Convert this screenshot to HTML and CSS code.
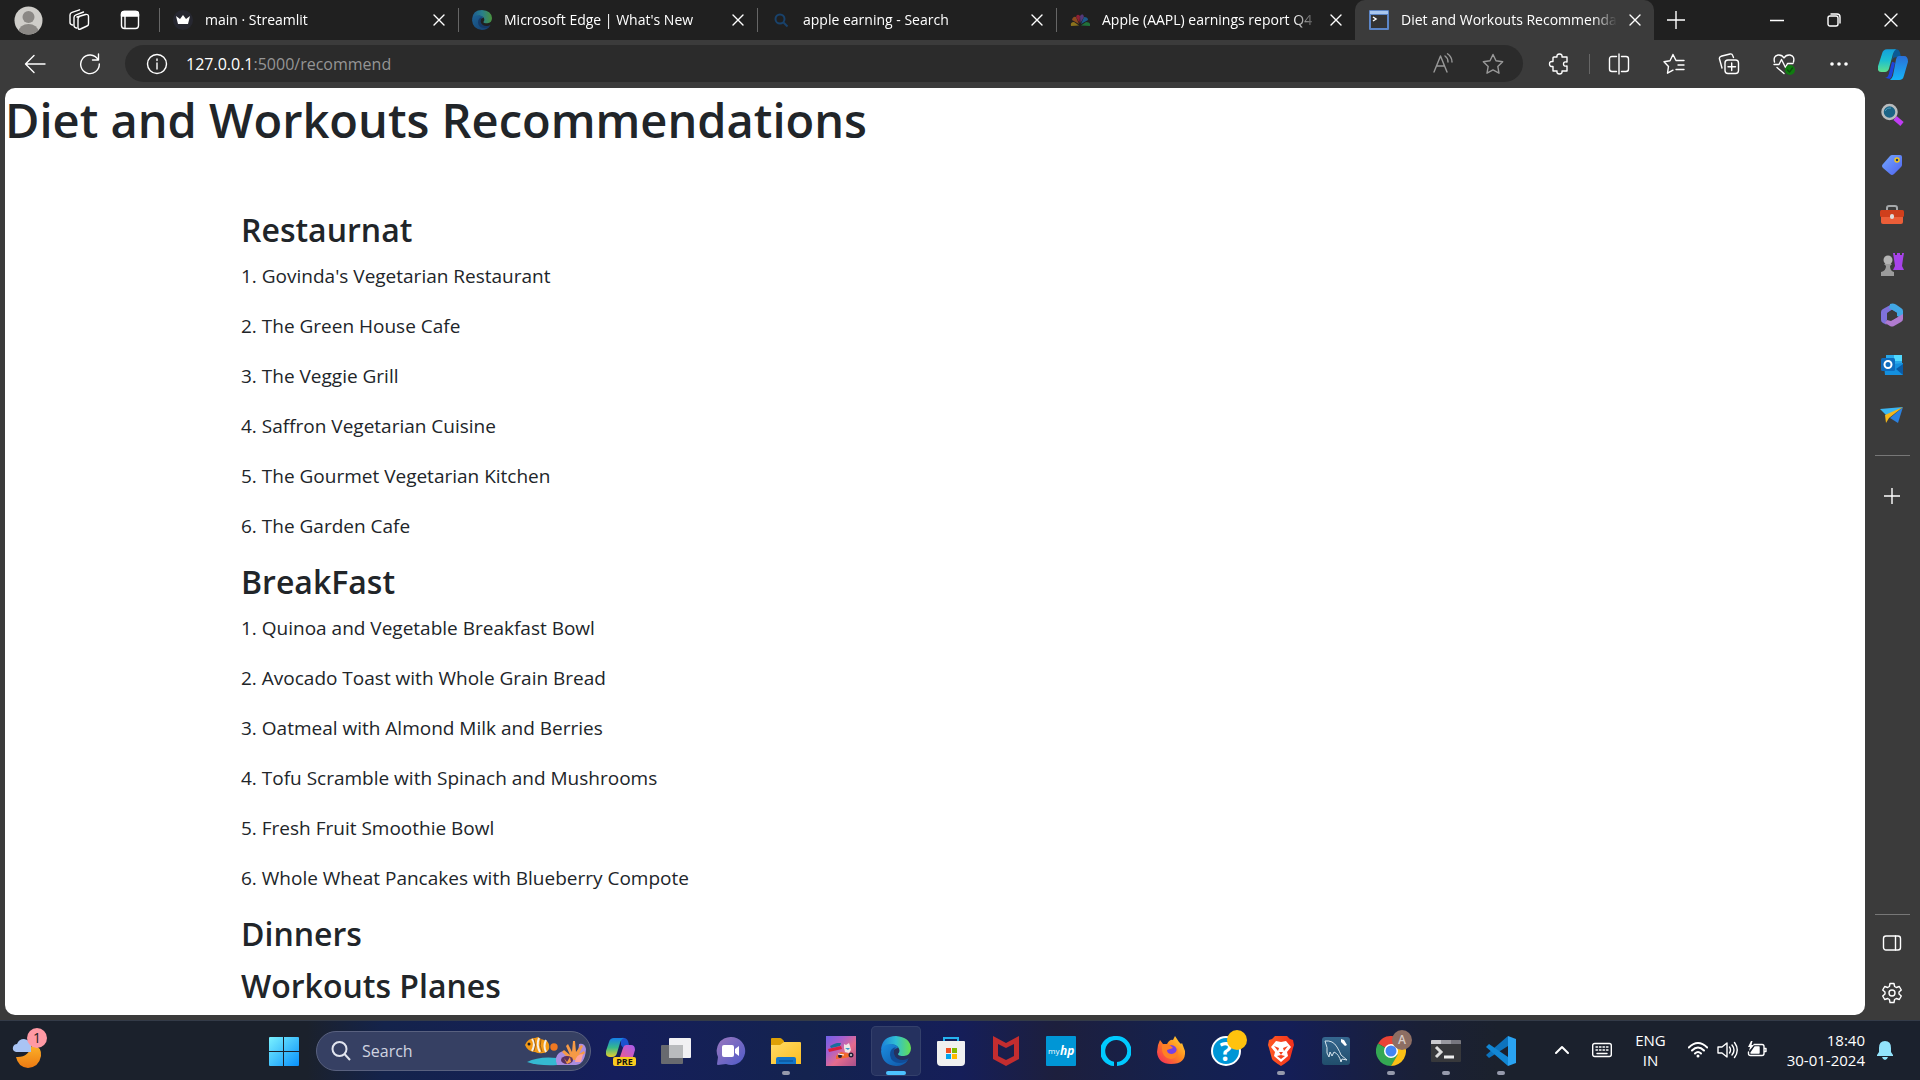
FILE: index.html
```html
<!DOCTYPE html>
<html lang="en">
<head>
<meta charset="utf-8">
<title>Diet and Workouts Recommendations</title>
<link rel="stylesheet" href="styles.css">
</head>
<body>
<header class="tabstrip">
  <div class="profile">
    <button class="icon-btn" aria-label="Profile"><svg width="29" height="29" viewBox="0 0 29 29"><defs><clipPath id="av"><circle cx="14.500" cy="14.500" r="14"/></clipPath></defs><circle cx="14.500" cy="14.500" r="14" fill="#cfcdc9"/><g clip-path="url(#av)" fill="#8b8885"><circle cx="14.500" cy="11" r="6"/><ellipse cx="14.500" cy="26" rx="10" ry="8"/></g></svg></button>
    <button class="icon-btn" aria-label="Workspaces"><svg class="line" width="22" height="22" viewBox="0 0 22 22"><path d="M9 8l8.500-2.500q3-.5 3 2v7.500q0 1.500-1.500 2l-6.500 3q-2.500.8-2.500-1.500V10q0-2 2-2.700M8.500 19Q6 18.500 6 16.500V8.500q0-2 2-2.700L15.500 3M4.500 16Q2 15.500 2 13.500V6q0-2 2-2.700L11.500.8"/></svg></button>
    <button class="icon-btn" aria-label="Tab actions"><svg class="line" width="20" height="20" viewBox="0 0 20 20"><rect x="1.500" y="1.500" width="17" height="17" rx="3"/><path d="M1.500 6V4q0-2.500 2.500-2.500h12q2.500 0 2.500 2.500v2z" fill="#fff"/><path d="M5 6v12"/></svg></button>
  </div>
  <nav class="tabs" aria-label="Tabs">
    <div class="tab">
      <svg width="20" height="20" viewBox="0 0 20 20"><circle cx="10" cy="10" r="10" fill="#262730"/><path d="M3 6l4 3 3-4 3 4 4-3-2 8H5z" fill="#fff"/></svg>
      <a href="#">main · Streamlit</a><button class="close" aria-label="Close tab"><svg class="line" width="12" height="12" viewBox="0 0 12 12"><path d="M1 1l10 10M11 1L1 11"/></svg></button>
    </div>
    <div class="tab">
      <svg class="dim" width="20" height="20" viewBox="0 0 30 30"><use href="#edge"/></svg>
      <a href="#">Microsoft Edge | What's New</a><button class="close" aria-label="Close tab"><svg class="line" width="12" height="12" viewBox="0 0 12 12"><path d="M1 1l10 10M11 1L1 11"/></svg></button>
    </div>
    <div class="tab">
      <svg width="20" height="20" viewBox="0 0 20 20" fill="none" stroke="#19426b" stroke-width="2"><circle cx="9" cy="9" r="4.500"/><path d="M12.500 12.500l4 4"/></svg>
      <a href="#">apple earning - Search</a><button class="close" aria-label="Close tab"><svg class="line" width="12" height="12" viewBox="0 0 12 12"><path d="M1 1l10 10M11 1L1 11"/></svg></button>
    </div>
    <div class="tab">
      <svg width="20" height="20" viewBox="0 0 20 20"><path d="M9 15.500L1 16q-1-4 3-4z" fill="#8b731c"/><path d="M9 14L2 10q1-4 4-3z" fill="#8c4a20"/><path d="M9.500 13L6 7q1-4 4-1z" fill="#8d2035"/><path d="M10.500 13L10 6q3-4 4 1z" fill="#553878"/><path d="M11 14l3-7q4 0 4 3z" fill="#1c5a8c"/><path d="M11 15.500l5-3.500q5 0 4 4z" fill="#20723a"/></svg>
      <a href="#">Apple (AAPL) earnings report Q4</a><button class="close" aria-label="Close tab"><svg class="line" width="12" height="12" viewBox="0 0 12 12"><path d="M1 1l10 10M11 1L1 11"/></svg></button>
    </div>
    <div class="tab active">
      <svg width="20" height="20" viewBox="0 0 20 20"><rect width="20" height="20" rx="1" fill="#5c86c8"/><rect x="1" y="1" width="18" height="3" fill="#a9c7ef"/><rect x="2" y="5" width="16" height="13" fill="#333"/><path d="M4 7l3 2-3 2" fill="none" stroke="#fff" stroke-width="1.500"/></svg>
      <a href="#">Diet and Workouts Recommendations</a><button class="close" aria-label="Close tab"><svg class="line" width="12" height="12" viewBox="0 0 12 12"><path d="M1 1l10 10M11 1L1 11"/></svg></button>
    </div>
  </nav>
  <button class="newtab" aria-label="New tab"><svg class="line" width="18" height="18" viewBox="0 0 18 18"><path d="M9 0v18M0 9h18"/></svg></button>
  <div class="window-controls">
    <button aria-label="Minimize"><svg class="line" width="14" height="14" viewBox="0 0 14 14"><path d="M0 7.500h14"/></svg></button>
    <button aria-label="Restore"><svg class="line" width="14" height="14" viewBox="0 0 14 14"><rect x="1" y="3" width="10" height="10" rx="2"/><path d="M4 1h6q3 0 3 3v6"/></svg></button>
    <button aria-label="Close window"><svg class="line" width="14" height="14" viewBox="0 0 14 14"><path d="M1 1l12 12M13 1L1 13"/></svg></button>
  </div>
</header>

<div class="toolbar">
  <button class="icon-btn" aria-label="Back"><svg class="line" width="22" height="20" viewBox="0 0 22 20"><path d="M21 10H2M10 1.500L1.500 10l8.500 8.500"/></svg></button>
  <button class="icon-btn" aria-label="Refresh"><svg class="line" width="22" height="22" viewBox="0 0 22 22"><path d="M19 6.500A9.300 9.300 0 1 0 20.300 11M19.500 1v6H13.500"/></svg></button>
  <div class="address">
    <svg class="line" width="22" height="22" viewBox="0 0 22 22"><circle cx="11" cy="11" r="9.500"/><path d="M11 10v6M11 6v1.600"/></svg>
    <a class="url" href="#"><span>127.0.0.1</span>:5000/recommend</a>
    <button class="icon-btn muted" aria-label="Read aloud"><svg class="line" width="22" height="22" viewBox="0 0 22 22"><path d="M2 19L8.500 3 15 19M4.500 13h8M13 3q3 2 3 6M15.500.8Q20 4 20 9"/></svg></button>
    <button class="icon-btn muted" aria-label="Add to favorites"><svg class="line" width="22" height="22" viewBox="0 0 22 22"><path d="M11 1.500l3 6.200 6.700 1-4.900 4.700 1.200 6.800-6-3.300-6 3.300 1.200-6.800-4.900-4.700 6.700-1z"/></svg></button>
  </div>
  <div class="tools">
    <button class="icon-btn" aria-label="Extensions"><svg class="line" width="22" height="22" viewBox="0 0 22 22"><path d="M6 4h3q-.5-3 2.500-3T14 4h5v5q-3.500-.7-3.500 2t3.500 2v5h-5q.5 3-2.500 3T9 18H5v-4.500q-3.500.5-3.500-2.500T5 8.500V5q0-1 1-1z"/></svg></button>
    <span class="divider"></span>
    <button class="icon-btn" aria-label="Split screen"><svg class="line" width="22" height="22" viewBox="0 0 22 22"><path d="M8.500 3.500H4q-2.500 0-2.500 2.500v10q0 2.500 2.500 2.500h4.500M13.500 3.500H18q2.500 0 2.500 2.500v10q0 2.500-2.500 2.500h-4.500M11 1v20"/></svg></button>
    <button class="icon-btn" aria-label="Favorites"><svg class="line" width="22" height="22" viewBox="0 0 22 22"><path d="M13 7.500h8M15 12h6M13 16.500h8M13 7.500L10 1.500 7 7.700l-6 1 4.500 4.700-1 6.800 5.500-3"/></svg></button>
    <button class="icon-btn" aria-label="Collections"><svg class="line" width="22" height="22" viewBox="0 0 22 22"><rect x="7" y="7" width="13.500" height="13.500" rx="3"/><path d="M13.700 10v7.500M10 13.700h7.500M4 15L1.500 6q-.5-2 1.500-2.700L12 1q2-.5 2.700 1.500L15.500 4.500"/></svg></button>
    <button class="icon-btn" aria-label="Browser essentials"><svg class="line" width="22" height="22" viewBox="0 0 22 22"><path d="M1.500 9Q0 3 5 2q4-.5 6 3 2-3.500 6-3 5 1 3.500 7M1 11.500h5l2.500-5 4 8 2-4h5.500M4 14.500l7 6"/><circle cx="17" cy="17" r="5" fill="#107c10" stroke="none"/><path d="M14.500 17l2 2 3-4" stroke="#0b4f0b"/></svg></button>
    <button class="icon-btn" aria-label="More"><svg width="22" height="22" viewBox="0 0 22 22" fill="#fff"><circle cx="4" cy="11" r="1.800"/><circle cx="11" cy="11" r="1.800"/><circle cx="18" cy="11" r="1.800"/></svg></button>
  </div>
  <button class="copilot" aria-label="Copilot"><svg width="30" height="32" viewBox="0 0 30 28" preserveAspectRatio="none"><defs><linearGradient id="cp1" x1="0" y1="0" x2="0" y2="1"><stop offset="0" stop-color="#14a0dc"/><stop offset=".5" stop-color="#1cbfd0"/><stop offset="1" stop-color="#5fe08c"/></linearGradient><linearGradient id="cp2" x1="0" y1="0" x2="0" y2="1"><stop offset="0" stop-color="#2a6fd8"/><stop offset="1" stop-color="#16b4f8"/></linearGradient></defs><path d="M16 1h2q3 0 4 3l1 4h-5q-3 0-4 3z" fill="#0a5a96"/><path d="M7 26q3 0 4-4l3-10 3 1-3 11q-1 3-3 3z" fill="#1e43dc"/><path d="M9 1h9q-2 1-3 4l-4 13q-1 3-4 3H3q-4 0-3-5L4 5q1-4 5-4z" fill="url(#cp1)"/><path d="M21 7h5q4 0 4 5l-4 12q-1 4-5 4h-9q2-1 3-4l3-14q1-3 3-3z" fill="url(#cp2)"/></svg></button>
</div>

<div class="middle">
  <main class="page">
    <h1>Diet and Workouts Recommendations</h1>
    <div class="container">
      <section>
        <h3>Restaurnat</h3>
        <p>1. Govinda's Vegetarian Restaurant</p>
        <p>2. The Green House Cafe</p>
        <p>3. The Veggie Grill</p>
        <p>4. Saffron Vegetarian Cuisine</p>
        <p>5. The Gourmet Vegetarian Kitchen</p>
        <p>6. The Garden Cafe</p>
      </section>
      <section>
        <h3>BreakFast</h3>
        <p>1. Quinoa and Vegetable Breakfast Bowl</p>
        <p>2. Avocado Toast with Whole Grain Bread</p>
        <p>3. Oatmeal with Almond Milk and Berries</p>
        <p>4. Tofu Scramble with Spinach and Mushrooms</p>
        <p>5. Fresh Fruit Smoothie Bowl</p>
        <p>6. Whole Wheat Pancakes with Blueberry Compote</p>
      </section>
      <section><h3>Dinners</h3></section>
      <section><h3>Workouts Planes</h3></section>
    </div>
  </main>
  <aside class="sidebar" aria-label="Sidebar">
    <div class="side-group">
      <button aria-label="Search"><svg width="24" height="24" viewBox="0 0 24 24"><path d="M15 15l7 6" stroke="#c03cf4" stroke-width="5"/><circle cx="9.500" cy="9" r="7" fill="#1c6486" stroke="#b9bcbe" stroke-width="2.500"/><path d="M5 8q2-4 6-3" stroke="#4fa0c0" fill="none"/></svg></button>
      <button aria-label="Shopping"><svg width="24" height="24" viewBox="0 0 24 24"><defs><linearGradient id="tg" x1="0" y1="0" x2="1" y2="1"><stop stop-color="#73a8ff"/><stop offset="1" stop-color="#4f62ee"/></linearGradient></defs><path d="M12 2h8q2 0 2 2v8q0 1-1 2l-7 7q-2 2-4 0l-7-6q-2-2 0-4l7-8q1-1 2-1z" fill="url(#tg)"/><circle cx="17" cy="7" r="2" fill="#1d3b70" stroke="#f3c51c" stroke-width="1.500"/></svg></button>
      <button aria-label="Tools"><svg width="24" height="24" viewBox="0 0 24 24"><path d="M7 7V5q0-2 2-2h6q2 0 2 2v2" fill="none" stroke="#a5a8aa" stroke-width="2"/><rect x="1" y="12" width="22" height="9" rx="2" fill="#eb5e38"/><rect x="0" y="7" width="24" height="7" rx="1.500" fill="#cf3f1c"/><rect x="10" y="11" width="4" height="5" rx="2" fill="#ddd"/></svg></button>
      <button aria-label="Games"><svg width="24" height="24" viewBox="0 0 24 24"><path d="M13 0h2v2h2V0h3v2h2V0h2l-1 6-1 7 2 4H13l2-4-1-7z" fill="#a743ea"/><circle cx="8" cy="7" r="4.500" fill="#b4b4b4"/><path d="M4 11h8l-2 2q0 5 4 6v4H1v-4q5-1 5-6z" fill="#9b9b9b"/></svg></button>
      <button aria-label="Microsoft 365"><svg width="24" height="24" viewBox="0 0 24 24"><path d="M12 1L3 6q-2 1-2 3v8q0 2 2 3l4 2q-2-2 0-5V10l6-4z" fill="#7f72dc"/><path d="M10 1q3-1 6 .5L21 5q2 1 2 3v8l-6-3v-3l-8-5 1-3z" fill="#42a7e4"/><path d="M7 17l4 1 12-7v5q0 2-2 3l-7 4q-2 1-4 0l-5-3z" fill="#b07bd0"/><path d="M12 7l5 3v4l-5 3-4-3v-4z" fill="#3b3b3b"/></svg></button>
      <button aria-label="Outlook"><svg width="24" height="24" viewBox="0 0 24 24"><path d="M6 2h16v10H6z" fill="#28a8ea"/><path d="M14 2h8v6h-8z" fill="#50d9ff"/><path d="M4 12l19-2v12H5z" fill="#1490df"/><path d="M16 16l7-5v11z" fill="#0a5ba5"/><rect x="1" y="5" width="14" height="13" rx="1.500" fill="#0f6cbd"/><circle cx="8" cy="11.500" r="3.500" fill="none" stroke="#fff" stroke-width="2"/></svg></button>
      <button aria-label="Drop"><svg width="24" height="24" viewBox="0 0 24 24"><path d="M0 6l23-2L7 13z" fill="#3bb6f2"/><path d="M10 15L23 4l-5 16z" fill="#2b81df"/><path d="M5 12L23 4 9 15l-3 5z" fill="#f5b719"/></svg></button>
    </div>
    <hr>
    <button aria-label="Customize"><svg class="line" width="16" height="16" viewBox="0 0 16 16"><path d="M8 0v16M0 8h16"/></svg></button>
    <div class="side-bottom">
      <hr>
      <button aria-label="Hide sidebar"><svg class="line" width="20" height="18" viewBox="0 0 20 18"><rect x="1.500" y="2" width="17" height="14" rx="2.500"/><path d="M13.500 2v14"/></svg></button>
      <button aria-label="Settings"><svg class="line" width="22" height="22" viewBox="0 0 22 22"><path d="M9 1.500h4l.6 3 1.700 1 3-1 2 3.500-2.300 2v2l2.300 2-2 3.500-3-1-1.700 1-.6 3H9l-.6-3-1.700-1-3 1-2-3.500L4 12V10L1.700 8l2-3.500 3 1 1.700-1z"/><circle cx="11" cy="11" r="3"/></svg></button>
    </div>
  </aside>
</div>

<footer class="taskbar">
  <div class="widgets"><button aria-label="Widgets"><svg width="36" height="36" viewBox="0 0 36 36"><defs><linearGradient id="moon" x1="0" y1="0" x2="0" y2="1"><stop stop-color="#fdb52b"/><stop offset="1" stop-color="#ed7a12"/></linearGradient></defs><path d="M6 24q13 1 16-13 10 3 9 12-2 11-13 12Q8 34 6 24z" fill="url(#moon)"/><path d="M6 19q-4-1-3-5 1-3 4-3 2-5 7-5 6 1 7 6v7z" fill="#a9c4f4"/></svg><span class="badge">1</span></button></div>
  <div class="apps">
    <button class="app" aria-label="Start"><svg width="30" height="30" viewBox="0 0 30 30"><defs><linearGradient id="win" gradientUnits="userSpaceOnUse" x1="0" y1="0" x2="30" y2="30"><stop stop-color="#7cf3ff"/><stop offset="1" stop-color="#0890fa"/></linearGradient></defs><path d="M0 2q0-1 1-1h13v14H0zM15 1h14q1 0 1 1v13H15zM0 16h14v14H1q-1 0-1-1zM15 16h15v13q0 1-1 1H15z" fill="url(#win)"/></svg></button>
    <label class="search">
      <svg width="20" height="20" viewBox="0 0 20 20" fill="none" stroke="#e2e5ef" stroke-width="2"><circle cx="8.500" cy="8" r="7"/><path d="M13.500 13l5.500 6"/></svg>
      <input type="text" placeholder="Search" aria-label="Search">
      <svg width="62" height="30" viewBox="0 0 62 30"><path d="M3 26q12-6 30-4v7q-18 1-30-3z" fill="#35b9d1"/><path d="M1 9q3-7 10-7l3-1 3 2 6 2q3 3 2 8-2 4-6 4-4 1-8-1Q4 16 1 9z" fill="#f49a16"/><path d="M8 3q4 5 0 12M15 2q-3 7 1 14M22 4q-3 6 0 12" fill="none" stroke="#f4eee6" stroke-width="2"/><path d="M10 3q3 6 0 12M17 3q-2 7 1 13" fill="none" stroke="#59341c" stroke-width=".6"/><circle cx="5" cy="8" r="1.500" fill="#222"/><circle cx="30" cy="11" r="3.700" fill="#ef7821"/><path d="M33 29q-3-8 2-12 5-4 9 1 5 4 10 0l1-10q6-1 7 5-1 15-10 16z" fill="#aa8de0"/><path d="M45 24q-3-5-7-8l2-2 6 5-4-9 2-2 4 8 1-11h2l1 11 5-7 2 1-4 8 5-3 1 2-8 7z" fill="#f69a45"/><ellipse cx="43" cy="24" rx="6" ry="4" fill="#5c315f"/><path d="M40 22l3 4 3-5 1 5-4 2z" fill="#f69a45"/><path d="M51 26q1-8 8-8l-2 8z" fill="#ffa19b"/></svg>
    </label>
    <button class="app" aria-label="Copilot preview"><svg width="30" height="30" viewBox="0 0 30 30"><defs><linearGradient id="c1" x1="0" y1="0" x2="0" y2="1"><stop stop-color="#157fea"/><stop offset=".5" stop-color="#36b98c"/><stop offset="1" stop-color="#e9cf2b"/></linearGradient><linearGradient id="c2" x1="1" y1="0" x2="0" y2="1"><stop stop-color="#a55cf0"/><stop offset="1" stop-color="#f55b86"/></linearGradient></defs><path d="M15 2q5-1 7 3l1 4q-4 0-5 4l-3-4z" fill="#1b52cf"/><path d="M8 2h10q-3 1-4 5l-3 10q-1 4-5 4H4q-5 0-4-6L3 6q1-4 5-4z" fill="url(#c1)"/><path d="M20 9h5q4 0 4 5l-3 10H13l4-12q1-3 3-3z" fill="url(#c2)"/><rect x="7" y="21" width="23" height="9" rx="2" fill="#f9cb20"/><text x="18.500" y="28.500" text-anchor="middle" class="t-pre">PRE</text></svg></button>
    <button class="app" aria-label="Task view"><svg width="30" height="30" viewBox="0 0 30 30"><rect x="0" y="9" width="22" height="19" rx="1" fill="#686a6f"/><rect x="8" y="2" width="22" height="20" rx="1" fill="#f1f1f3"/><path d="M8 9h14v13H8z" fill="#b9bbbd"/></svg></button>
    <button class="app" aria-label="Chat"><svg width="30" height="30" viewBox="0 0 30 30"><defs><linearGradient id="ch" x1="0" y1="0" x2="1" y2="1"><stop stop-color="#9a77be"/><stop offset="1" stop-color="#4f5bc8"/></linearGradient></defs><path d="M15 1a14 14 0 1 1-5 27L2 29q-1 0-1-1l1-7A14 14 0 0 1 15 1z" fill="url(#ch)"/><rect x="6" y="9" width="12" height="12" rx="2" fill="#fff"/><path d="M19 13l4-3v10l-4-3z" fill="#fff"/></svg></button>
    <button class="app running" aria-label="File Explorer"><svg width="30" height="30" viewBox="0 0 30 30"><defs><linearGradient id="fo" x1="0" y1="0" x2="1" y2="1"><stop stop-color="#ffdb66"/><stop offset="1" stop-color="#fbbe22"/></linearGradient></defs><path d="M0 3q0-1 1-1h8q1 0 2 1l2 2v4H0z" fill="#dda006"/><path d="M0 9h9l4-3h16q1 0 1 1v21H0z" fill="url(#fo)"/><path d="M5 28v-5q0-2 2-2h16q2 0 2 2v5z" fill="#1275c9"/><path d="M8 25h14" stroke="#0a4a8b"/></svg></button>
    <button class="app" aria-label="Kart game"><svg width="30" height="30" viewBox="0 0 30 30"><defs><linearGradient id="ka" x1="0" y1="0" x2="1" y2="1"><stop stop-color="#6e62e8"/><stop offset=".3" stop-color="#a45fd0"/><stop offset=".6" stop-color="#e56c8d"/><stop offset="1" stop-color="#a7508b"/></linearGradient></defs><rect width="30" height="30" fill="url(#ka)"/><path d="M4 10l4-2 3-1 4 0-1 3-9 2z" fill="#176f9c"/><path d="M2 13l13-3 1 3-13 3z" fill="#d9203d"/><path d="M10 20l5-4 4 1 7 1 1 2-8 2-9 1z" fill="#f26a2c"/><path d="M18 8l2 1 3-2 1 3 1 4-2 3-4-1-1-4z" fill="#eee6e4"/><path d="M19 12h5l-2 2z" fill="#3898c9"/><circle cx="14" cy="20" r="2" fill="#242038"/><circle cx="25" cy="19" r="2.500" fill="#242038"/><circle cx="25" cy="19" r="1" fill="#ddd"/><path d="M12 18l6 1" stroke="#fff"/></svg></button>
    <button class="app running current" aria-label="Microsoft Edge"><svg width="30" height="30" viewBox="0 0 30 30"><defs><linearGradient id="e1" x1="0" y1="0" x2="1" y2="0"><stop stop-color="#1c7fd9"/><stop offset=".5" stop-color="#2fbfd5"/><stop offset="1" stop-color="#66e04f"/></linearGradient><linearGradient id="e2" x1="0" y1="0" x2="1" y2="1"><stop stop-color="#1b8ee0"/><stop offset="1" stop-color="#0f55a6"/></linearGradient></defs><g id="edge"><path d="M0 14Q1 0 15 0q14 1 15 12 0 7-7 8-6 0-6-2 3-3 0-7-6-6-17 3z" fill="url(#e1)"/><path d="M0 15Q2 8 9 8q7 0 8 4-5 0-5 6 1 7 8 8 4 0 7-2-4 6-12 6Q1 29 0 15z" fill="url(#e2)"/><path d="M9 19q0-7 6-8-3 3-2 7 2 6 9 6 3 0 6-2-3 5-9 5-9 0-10-8z" fill="#114c97"/></g></svg></button>
    <button class="app" aria-label="Microsoft Store"><svg width="30" height="30" viewBox="0 0 30 30"><path d="M8 7V2h14v5" fill="none" stroke="#25b2ee" stroke-width="2"/><path d="M1 6q0-1 1-1h26q1 0 1 1v20q0 4-4 4H5q-4 0-4-4z" fill="#f0f0f0"/><path d="M10 12h5v5h-5z" fill="#f25022"/><path d="M16 12h5v5h-5z" fill="#7fba00"/><path d="M10 18h5v5h-5z" fill="#00a4ef"/><path d="M16 18h5v5h-5z" fill="#ffb900"/></svg></button>
    <button class="app" aria-label="McAfee"><svg width="30" height="30" viewBox="0 0 30 30"><path d="M2 0l13 7L28 0v23l-13 7-13-7zM7 8v12l8 4 8-4V8l-8 4z" fill="#c32d2f"/></svg></button>
    <button class="app" aria-label="myHP"><svg width="30" height="30" viewBox="0 0 30 30"><rect width="30" height="30" rx="1" fill="#0096d6"/><text x="2" y="18" class="t-my">my</text><text x="14" y="19" class="t-hp">hp</text></svg></button>
    <button class="app" aria-label="Alexa"><svg width="30" height="30" viewBox="0 0 30 30"><path d="M15 0a15 15 0 0 1 1 30v-4a11 11 0 1 0-3-.2V30A15 15 0 0 1 15 0z" fill="#00caff"/></svg></button>
    <button class="app" aria-label="Firefox"><svg width="30" height="30" viewBox="0 0 30 30"><defs><linearGradient id="ff" x1="1" y1="0" x2="0" y2="1"><stop stop-color="#ffe03a"/><stop offset=".45" stop-color="#ff8b1e"/><stop offset="1" stop-color="#f4215f"/></linearGradient></defs><path d="M2 9l2-5 3 4h4q3-5 6-4l2-4 4 6 2 2 1-1 3 8q1 13-14 13Q2 28 1 16z" fill="url(#ff)"/><circle cx="15" cy="15" r="6" fill="#7542e5"/><path d="M6 9l5-1q4 1 6 4l-6 2q0 4 5 4 5-1 5-6 3 10-6 11Q5 22 6 9z" fill="#ff8125"/></svg></button>
    <button class="app" aria-label="HP Support Assistant"><svg width="30" height="30" viewBox="0 0 30 30"><circle cx="15" cy="15" r="14" fill="#0096d6" stroke="#fff" stroke-width="2"/><text x="15" y="25" text-anchor="middle" class="t-q">?</text></svg><span class="dot yellow"></span></button>
    <button class="app running" aria-label="Brave"><svg width="30" height="30" viewBox="0 0 30 30"><defs><linearGradient id="br" x1="0" y1="0" x2="1" y2="0"><stop stop-color="#ff5a22"/><stop offset="1" stop-color="#f2301d"/></linearGradient></defs><path d="M9 0h12l3 3 3 1 1 5-1 3-3 11q-1 2-9 7-8-5-9-7L3 12 2 9l1-5 3-1z" fill="url(#br)"/><path d="M10 5l5 1 5-1 5 6-4 5 1 4-7 6-7-6 1-4-4-5z" fill="#fff"/><path d="M8 10l5 2-1 3zM22 10l-5 2 1 3zM13 16h4l-2 3zM11 20l4-1 4 1-4 3z" fill="#f5431f"/></svg></button>
    <button class="app" aria-label="MySQL Workbench"><svg width="30" height="30" viewBox="0 0 30 30"><defs><linearGradient id="my" x1="0" y1="0" x2="0" y2="1"><stop stop-color="#35678f"/><stop offset="1" stop-color="#214e6c"/></linearGradient></defs><rect x="1" y="1" width="28" height="28" rx="3" fill="url(#my)"/><path d="M4 5q8-1 12 6 3 5 4 8l6 5-5-1-1 3q-2-8-7-10l-2 4-2-4-1 5-2-4q1-5-2-12z" fill="none" stroke="#d5e3ec"/><path d="M20 3l3 1 3 5-2 1-4-4z" fill="#fff"/></svg></button>
    <button class="app running" aria-label="Google Chrome"><svg width="30" height="30" viewBox="0 0 30 30"><path d="M15 15L2 7.500A15 15 0 0 1 28 7.500z" fill="#ea4335"/><path d="M15 15L2 7.500A15 15 0 0 0 15 30l7-11z" fill="#34a853"/><path d="M15 8h13.300A15 15 0 0 1 15 30l6.500-11z" fill="#fbc116"/><circle cx="15" cy="15" r="7" fill="#fff"/><circle cx="15" cy="15" r="5.500" fill="#4285f4"/></svg><span class="dot brown">A</span></button>
    <button class="app running" aria-label="Command Prompt"><svg width="30" height="30" viewBox="0 0 30 30"><rect y="4" width="30" height="22" rx="1" fill="#37383b"/><path d="M0 5q0-1 1-1h9v4H0z" fill="#c9c9ce"/><path d="M10 4h10v4H10z" fill="#99999f"/><path d="M20 4h9q1 0 1 1v3H20z" fill="#77777e"/><path d="M5 11l5 5-5 5" fill="none" stroke="#ddd" stroke-width="3"/><path d="M13 21h10" stroke="#eee" stroke-width="3"/></svg></button>
    <button class="app running" aria-label="Visual Studio Code"><svg width="30" height="30" viewBox="0 0 30 30"><path d="M22 0L0 19l3 3 19-12z" fill="#0d73bd"/><path d="M22 30L0 11l3-3 19 13z" fill="#1287d4"/><path d="M22 0l8 3v24l-8 3z" fill="#2aa3f2"/></svg></button>
  </div>
  <div class="tray">
    <button aria-label="Hidden icons"><svg class="line bold" width="14" height="10" viewBox="0 0 14 10"><path d="M1 8l6-6 6 6"/></svg></button>
    <button class="keyboard" aria-label="Touch keyboard"><svg class="line" width="20" height="16" viewBox="0 0 20 16"><rect x=".7" y="1.500" width="18.600" height="13" rx="2"/><path d="M4 5h1.500M7.500 5H9M11 5h1.500M14.500 5H16M4 8h1.500M7.500 8H9M11 8h1.500M14.500 8H16M5 11.500h10"/></svg></button>
    <button class="lang">ENG<br>IN</button>
    <button class="status" aria-label="Network, volume and battery">
      <svg class="line bold" width="20" height="20" viewBox="0 0 20 20"><path d="M.8 7.500Q10-1.500 19.200 7.500M4 10.500q6-6 12 0M7 13.500q3-3 6 0"/><circle cx="10" cy="16" r="1.500" fill="#fff" stroke="none"/></svg>
      <svg class="line" width="21" height="20" viewBox="0 0 21 20"><path d="M1 7h4l5-4v14l-5-4H1zM12.500 7q2 3 0 6M15 5q4 5 0 10M17.500 2.500q5.500 7.500 0 15"/></svg>
      <svg class="line" width="20" height="20" viewBox="0 0 20 20"><path d="M7 4.500h8q2 0 2 2v7q0 2-2 2H3.500q-2 0-2-2V12M17.500 8.500H19v3h-1.500"/><path d="M8 7h4v6H4z" fill="#fff"/><path d="M4 1L1 7h2l-1 4 5-6H4.500l1-4z" fill="#fff" stroke="none"/></svg>
    </button>
    <button class="clock">18:40<br>30-01-2024</button>
    <button class="bell" aria-label="Notifications"><svg width="16" height="20" viewBox="0 0 16 20"><path d="M8 1q6 0 6 7v4l2 3v1H0v-1l2-3V8q0-7 6-7zM5 17h6q-1 3-3 3t-3-3z" fill="#92e3fb"/></svg></button>
  </div>
</footer>
</body>
</html>
```
FILE: styles.css
```css
* { box-sizing: border-box; }

body {
  margin: 0;
  height: 100vh;
  display: flex;
  flex-direction: column;
  overflow: hidden;
  background: #3b3b3b;
  color: #fff;
  font-family: "Open Sans", "Noto Sans", sans-serif;
  font-size: 14px;
}

button {
  display: flex;
  align-items: center;
  justify-content: center;
  padding: 0;
  border: 0;
  background: none;
  color: inherit;
  font: inherit;
}

a { color: inherit; text-decoration: none; }
svg { flex: none; display: block; }
.line { fill: none; stroke: #fff; stroke-width: 1.4; stroke-linecap: round; stroke-linejoin: round; }
.bold { stroke-width: 2; }
.icon-btn { width: 50px; height: 40px; }

/* Tab strip */
.tabstrip { display: flex; flex: none; height: 40px; padding-bottom: 1px; background: #202020; }
.profile { display: flex; flex: none; gap: 1px; width: 159px; padding-left: 3px; }
.tabs { display: flex; flex: 0 1 1495px; min-width: 0; }
.tab {
  display: flex;
  flex: 1 1 0;
  min-width: 0;
  align-items: center;
  gap: 12px;
  padding: 0 13px 0 14px;
  background: linear-gradient(#666, #666) left center / 1px 24px no-repeat;
}
.tab a {
  flex: 1;
  overflow: hidden;
  white-space: nowrap;
  mask-image: linear-gradient(to left, transparent, #000 24px);
}
.tab.active { margin-bottom: -1px; padding-bottom: 1px; background: #3b3b3b; border-radius: 10px 10px 0 0; }
.close { width: 12px; height: 24px; }
.dim { opacity: .6; }
.newtab { width: 44px; }
.window-controls { display: flex; margin-left: auto; padding-right: 1px; }
.window-controls button { width: 57px; }

/* Toolbar */
.toolbar { display: flex; flex: none; align-items: center; height: 48px; padding: 0 0 1px 7px; }
.toolbar > .icon-btn { width: 55px; }
.address {
  display: flex;
  flex: 1;
  align-items: center;
  height: 37px;
  margin-left: 8px;
  padding: 0 5px 0 21px;
  border-radius: 19px;
  background: #2b2b2b;
}
.url { flex: 1; margin-left: 18px; color: #959595; font-size: 16px; }
.url span { color: #fff; }
.muted .line { stroke: #999; }
.tools { display: flex; align-items: center; padding-left: 8px; }
.tools .icon-btn { width: 55px; }
.divider { width: 1px; height: 20px; margin: 0 1px 0 3px; background: #666; }
.copilot { width: 54px; height: 40px; }

/* Browser content */
.middle { display: flex; flex: 1; min-height: 0; padding: 0 0 5px 5px; }
.page {
  flex: 1;
  overflow-y: auto;
  scrollbar-width: none;
  border-radius: 10px;
  background: #fff;
  color: #212529;
  font-size: 19px;
  line-height: 30px;
}
.page h1 { margin: 0 0 57px; font-size: 47px; line-height: 64px; font-weight: 600; }
.container { max-width: 1388px; margin: 0 auto; }
.page h3 { margin: 0 0 10px; font-size: 32px; line-height: 42px; font-weight: 600; }
.page p { margin: 0 0 20px; }

/* Sidebar */
.sidebar {
  display: flex;
  flex: none;
  flex-direction: column;
  align-items: center;
  width: 55px;
  padding: 2px 1px 0 0;
}
.sidebar button { width: 50px; height: 50px; }
.sidebar hr { width: 35px; height: 1px; margin: 15px 0; border: 0; background: #777; }
.side-bottom { margin: auto 0 -3px; }
.side-bottom hr { margin: 0 auto 3px; }

/* Taskbar */
.taskbar {
  display: flex;
  flex: none;
  align-items: center;
  height: 60px;
  border-top: 1px solid #343b48;
  background: linear-gradient(90deg, #1b212c 0, #1b212c 16%, #14234b 20%, #151e5c 32%, #14234f 42%, #151e59 50%, #1d1f3d 55%, #14214f 62%, #141e57 67%, #1a2036 74%, #1b212d 78%);
}
.widgets { flex: none; width: 259px; padding-left: 10px; }
.widgets button { position: relative; width: 36px; height: 50px; }
.badge {
  position: absolute;
  top: 2px;
  right: -1px;
  width: 20px;
  height: 20px;
  border-radius: 50%;
  background: #ff99a4;
  color: #222;
  font-size: 14px;
  line-height: 20px;
}
.apps { display: flex; flex: none; align-items: center; gap: 5px; }
.app { position: relative; width: 50px; height: 50px; border-radius: 5px; }
.search {
  display: flex;
  align-items: center;
  width: 275px;
  height: 40px;
  margin: 0 0 0 2px;
  padding: 0 4px 0 14px;
  border: 1px solid #59617f;
  border-radius: 20px;
  background: #364063;
}
.search input {
  flex: 1;
  min-width: 0;
  margin-left: 11px;
  padding: 0;
  border: 0;
  outline: 0;
  background: none;
  color: #fff;
  font: 16px "Open Sans", sans-serif;
}
.search input::placeholder { color: #d0d4e0; opacity: 1; }
.running::after {
  content: "";
  position: absolute;
  bottom: 1px;
  left: 21px;
  width: 8px;
  height: 4px;
  border-radius: 2px;
  background: #969aac;
}
.current { background: #25315f; box-shadow: inset 0 0 0 1px #34406b; }
.current::after { left: 15px; width: 20px; background: #4cc2ff; }
.dot {
  position: absolute;
  top: 4px;
  right: 4px;
  width: 20px;
  height: 20px;
  border-radius: 50%;
  font-size: 12px;
  font-weight: 600;
  line-height: 20px;
}
.yellow { background: #ffc20e; }
.brown { background: #8d6e63; color: #d7ccc8; }
.t-pre { font: 700 9px "Open Sans", sans-serif; fill: #111; }
.t-my { font: 8px "Open Sans", sans-serif; fill: #fff; }
.t-hp { font: italic 700 12px "Open Sans", sans-serif; fill: #fff; }
.t-q { font: 700 26px "Open Sans", sans-serif; fill: #fff; }
.tray {
  display: flex;
  align-items: center;
  margin-left: auto;
  padding: 0 27px 2px 0;
  font-size: 15px;
  line-height: 20px;
}
.keyboard { margin-left: 23px; }
.lang { margin-left: 23px; }
.status { gap: 9px; margin-left: 22px; }
.clock { margin-left: 20px; text-align: right; }
.bell { margin-left: 12px; }
```
